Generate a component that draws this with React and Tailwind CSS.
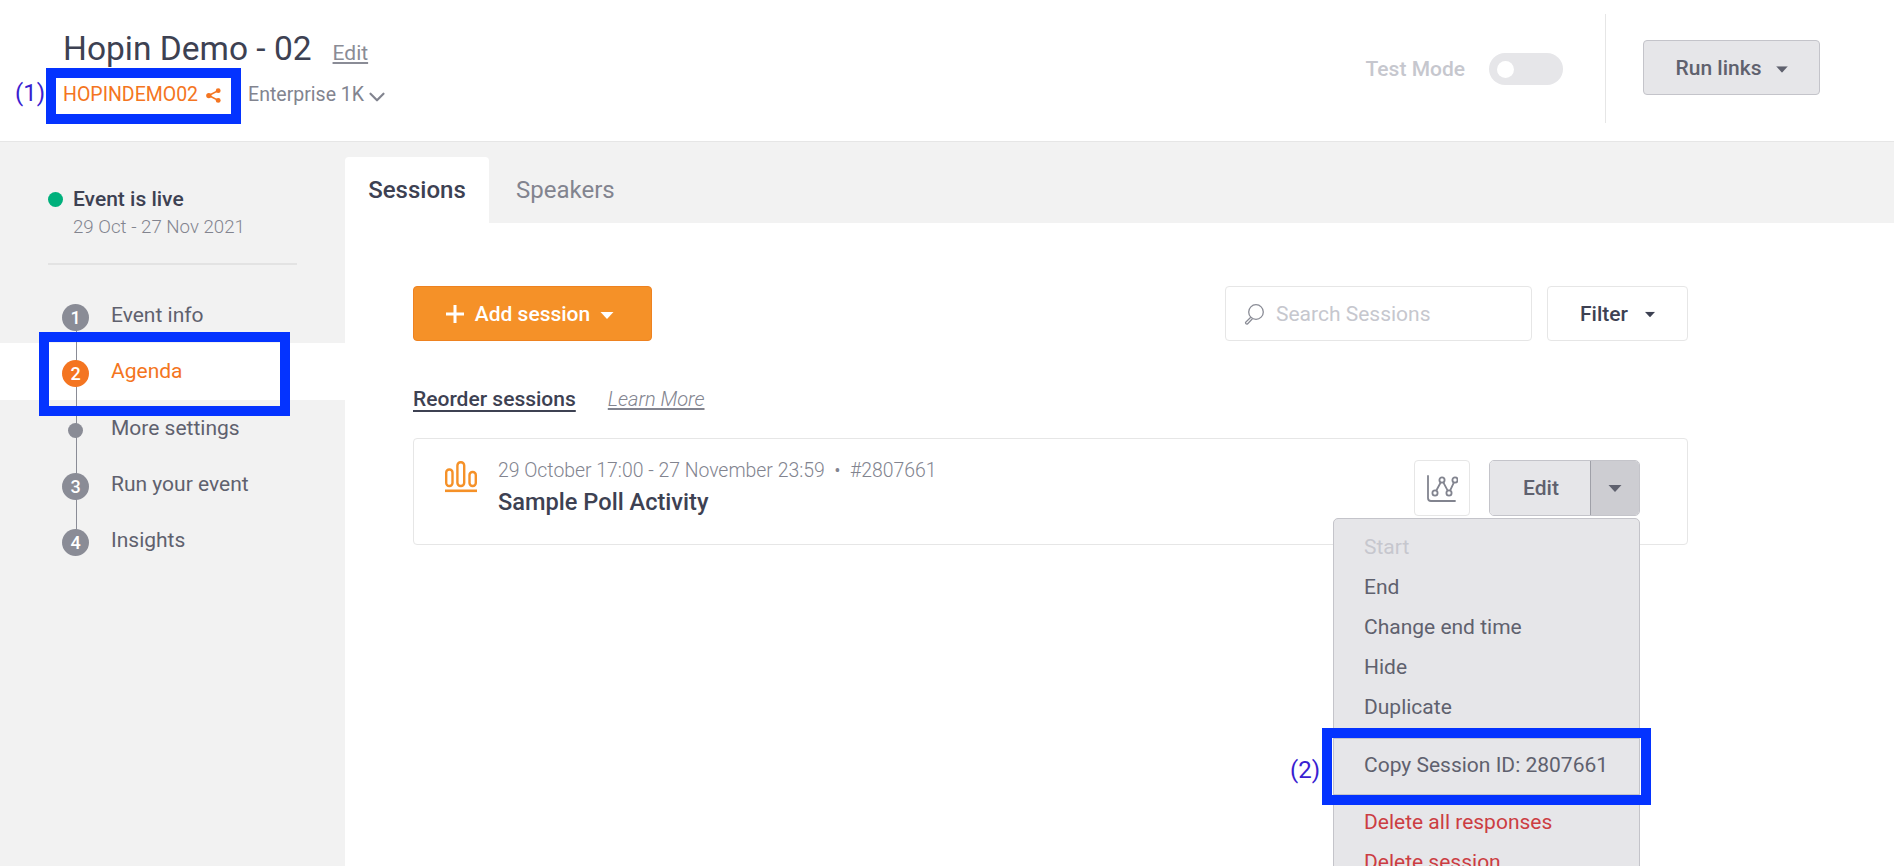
import React from "react";
import { ChevronDown } from "lucide-react";

const Caret = ({ className = "" }) => (
  <svg width="14" height="7" viewBox="0 0 14 7" className={className} fill="currentColor"><path d="M0.5 0h13L7 7z" /></svg>
);

const ShareIcon = () => (
  <svg width="15" height="15" viewBox="0 0 16 16" fill="#f47521" stroke="#f47521">
    <path d="M13 2.8 3 8l10 5.2" fill="none" strokeWidth="1.8" />
    <circle cx="13" cy="2.8" r="2.6" stroke="none" />
    <circle cx="3" cy="8" r="2.8" stroke="none" />
    <circle cx="13" cy="13.2" r="2.6" stroke="none" />
  </svg>
);

const PollIcon = () => (
  <svg width="32" height="32" viewBox="0 0 32 32" fill="none" stroke="#f59128" strokeWidth="2.4">
    <rect x="1.2" y="8.5" width="6.3" height="16.5" rx="3" />
    <rect x="12.4" y="1.2" width="6.8" height="23.8" rx="3.2" />
    <rect x="24.5" y="11" width="6.3" height="14" rx="3" />
    <path d="M0 29.8h32" strokeWidth="2.6" />
  </svg>
);

const GraphIcon = () => (
  <svg width="31" height="27" viewBox="0 0 31 27" fill="none" stroke="#82848f" strokeWidth="1.8">
    <path d="M1 1v22a3 3 0 0 0 3 3h24" strokeLinecap="round" />
    <circle cx="8" cy="18" r="2.6" />
    <circle cx="15" cy="5" r="2.6" />
    <circle cx="22" cy="18" r="2.6" />
    <circle cx="28" cy="5" r="2.6" />
    <path d="m9.2 15.7 4.6-8.4M16.3 7.3l4.4 8.4M23.1 15.6l3.8-8.2" />
  </svg>
);

const SearchIcon = () => (
  <svg width="22" height="22" viewBox="0 0 22 22" fill="none" stroke="#8a8c96" strokeWidth="1.3">
    <circle cx="13" cy="9" r="7.3" />
    <path d="M7.8 14.2 2.6 19.4a1.3 1.3 0 0 0 1.9 1.5l4.9-5.2" />
  </svg>
);

const Step = ({ n, label, active, dot }) => (
  <div className={`flex h-[56.25px] items-center pl-[62px] ${active ? "bg-white" : ""}`}>
    <div className="flex w-[49px] shrink-0 justify-start pt-[5px]">
      {dot ? (
        <div className="relative ml-[6px] h-[15px] w-[15px] rounded-full bg-[#8a8c96]" />
      ) : (
        <div className={`relative flex h-[27px] w-[27px] items-center justify-center rounded-full text-[18px] font-medium text-white ${active ? "bg-[#f47521]" : "bg-[#8a8c96]"}`}>
          {n}
        </div>
      )}
    </div>
    <span className={`pt-[1px] text-[21px] leading-none ${active ? "text-[#f47521]" : "text-[#5f616e]"}`}>{label}</span>
  </div>
);

const MenuItem = ({ children, className = "" }) => (
  <div className={`flex h-10 items-center pl-[30px] text-[21px] ${className}`}>{children}</div>
);

const Annot = ({ className }) => <div className={`absolute border-[10px] border-[#0433ff] ${className}`} />;

export default function App() {
  return (
    <div className="relative h-[866px] w-[1894px] overflow-hidden bg-white font-['Roboto',sans-serif] text-[#3d4152]">
      {/* Header */}
      <header className="flex h-[142px] items-start justify-between border-b border-[#e6e6e6] pl-[63px] pr-[74px]">
        <div>
          <div className="mt-[27px] flex items-baseline">
            <h1 className="text-[33.5px] leading-[44px]">Hopin Demo - 02</h1>
            <a className="ml-[21px] text-[21px] text-[#8a8c96] underline">Edit</a>
          </div>
          <div className="mt-[11px] flex h-[26px] items-center text-[19.5px] leading-[26px]">
            <span className="text-[#f47521]">HOPINDEMO02</span>
            <span className="ml-2"><ShareIcon /></span>
            <span className="ml-[27px] text-[#82848f]">Enterprise 1K</span>
            <ChevronDown size={26} strokeWidth={2} className="mt-[3px] text-[#82848f]" />
          </div>
        </div>
        <div className="flex h-full items-start">
          <div className="mt-[53px] flex items-center">
            <span className="text-[21px] font-medium leading-[32px] text-[#c6c7ce]">Test Mode</span>
            <div className="ml-6 flex h-[32px] w-[74px] items-center rounded-full bg-[#e6e6e9] pl-[8px]">
              <div className="h-[17px] w-[17px] rounded-full bg-white" />
            </div>
          </div>
          <div className="ml-[42px] mt-[14px] h-[109px] w-px bg-[#e6e6e6]" />
          <button className="ml-[37px] mt-[40px] flex h-[55px] w-[177px] items-center justify-center rounded-[4px] border border-[#c4c4ca] bg-[#e6e6e9] pl-[2px] pt-[2px] text-[21px] font-medium text-[#5f616e]">
            Run links
            <Caret className="ml-[14px] mt-[1px] scale-90 text-[#5f616e]" />
          </button>
        </div>
      </header>

      <div className="flex h-[724px]">
        {/* Sidebar */}
        <aside className="w-[345px] shrink-0 bg-[#f2f2f2]">
          <div className="mx-[48px] flex h-[123px] flex-col border-b-2 border-[#e3e3e3] pt-[43px]">
            <div className="flex items-center">
              <span className="h-[15px] w-[15px] rounded-full bg-[#00b07c]" />
              <span className="ml-[10px] text-[21px] font-medium leading-[28px] text-[#3d4152]">Event is live</span>
            </div>
            <div className="ml-[25px] text-[18.7px] font-light leading-[29px] text-[#82848f]">29 Oct - 27 Nov 2021</div>
          </div>
          <nav className="relative mt-[22px]">
            <div className="absolute left-[75.5px] top-[29px] h-[226px] w-px bg-[#8a8c96]" />
            <Step n="1" label="Event info" />
            <Step n="2" label="Agenda" active />
            <Step dot label="More settings" />
            <Step n="3" label="Run your event" />
            <Step n="4" label="Insights" />
          </nav>
        </aside>

        {/* Main */}
        <main className="min-w-0 flex-1">
          <div className="flex h-[81px] items-end bg-[#f2f2f2]">
            <div className="flex h-[66px] w-[144px] items-center justify-center rounded-t-[4px] bg-white text-[24px] font-medium text-[#3d4152]">Sessions</div>
            <div className="ml-[27px] flex h-[66px] items-center text-[24px] text-[#82848f]">Speakers</div>
          </div>

          <div className="w-[1343px] pl-[68px] pt-[63px]">
            <div className="flex items-center justify-between">
              <button className="flex h-[55px] w-[239px] items-center justify-center rounded-[4px] border border-[#ee8220] bg-[#f59128] pr-[5px] text-[21px] font-medium text-white">
                <svg width="18" height="18" viewBox="0 0 18 18" stroke="white" strokeWidth="3" className="mr-[11px]"><path d="M9 0v18M0 9h18" /></svg>
                <span className="pt-[2px]">Add session</span>
                <Caret className="ml-[10px] mt-[3px] text-white" />
              </button>
              <div className="flex gap-[15px]">
                <div className="flex h-[55px] w-[307px] items-center rounded-[4px] border border-[#e6e6e6] pl-[17px] text-[21px] text-[#c6c7ce]">
                  <SearchIcon />
                  <span className="ml-[11px] pt-[2px]">Search Sessions</span>
                </div>
                <button className="flex h-[55px] w-[141px] items-center justify-center rounded-[4px] border border-[#e6e6e6] pl-[2px] text-[21px] font-medium text-[#3d4152]">
                  <span className="pt-[2px]">Filter</span>
                  <Caret className="ml-[15px] mt-[1px] scale-[0.8] text-[#3d4152]" />
                </button>
              </div>
            </div>

            <div className="mt-[44px] flex items-baseline leading-[28px]">
              <a className="text-[21px] font-medium text-[#3d4152] underline decoration-2 underline-offset-[4px]">Reorder sessions</a>
              <a className="ml-[32px] text-[20px] font-light italic text-[#82848f] underline underline-offset-[2px]">Learn More</a>
            </div>

            <div className="mt-[25px] flex h-[107px] w-[1275px] rounded-[4px] border border-[#e6e6e6] pl-[31px] pt-[20px]">
              <div className="mt-[2px] w-[33px]"><PollIcon /></div>
              <div className="ml-[20px] w-[850px]">
                <div className="text-[19.4px] font-light leading-[24px] text-[#82848f]">
                  29 October 17:00 - 27 November 23:59&nbsp;&nbsp;•&nbsp;&nbsp;#2807661
                </div>
                <div className="mt-[5px] text-[23.6px] font-medium leading-[28px] text-[#3d4152]">Sample Poll Activity</div>
              </div>
              <div className="ml-[66px] mt-[1px] flex h-[56px] w-[56px] items-center justify-center rounded-[4px] border border-[#e6e6e6]">
                <GraphIcon />
              </div>
              <div className="ml-[19px] mt-[1px] flex h-[56px] w-[151px] overflow-hidden rounded-[5px] border border-[#c4c4ca]">
                <div className="flex flex-1 items-center justify-center bg-[#e6e6e9] pl-[2px] pt-[1px] text-[21px] font-medium text-[#5f616e]">Edit</div>
                <div className="flex w-[49px] items-center justify-center border-l border-[#9fa0a8] bg-[#cdcdd2]">
                  <Caret className="text-[#5f616e]" />
                </div>
              </div>
            </div>
          </div>
        </main>
      </div>

      {/* Dropdown menu */}
      <div className="absolute left-[1333px] top-[518px] h-[400px] w-[307px] rounded-[5px] border border-[#c4c4ca] bg-[#e6e6e9] pt-[9px] text-[#5f616e]">
        <MenuItem className="text-[#c6c7ce]">Start</MenuItem>
        <MenuItem>End</MenuItem>
        <MenuItem>Change end time</MenuItem>
        <MenuItem>Hide</MenuItem>
        <MenuItem>Duplicate</MenuItem>
        <div className="mt-[10px] border-y border-[#c4c4ca] pb-[8px] pt-[7px]">
          <MenuItem>Copy Session ID: 2807661</MenuItem>
        </div>
        <div className="pt-[8px]">
          <MenuItem className="text-[#cc3d42]">Delete all responses</MenuItem>
          <MenuItem className="text-[#cc3d42]">Delete session</MenuItem>
        </div>
      </div>

      {/* Annotations */}
      <Annot className="left-[46px] top-[68px] h-[56px] w-[195px]" />
      <Annot className="left-[39px] top-[332px] h-[84px] w-[251px]" />
      <Annot className="left-[1322px] top-[728px] h-[77px] w-[329px]" />
      <span className="absolute left-[15px] top-[78px] text-[24px] leading-[30px] text-[#3a1fd1]">(1)</span>
      <span className="absolute left-[1290px] top-[755px] text-[24px] leading-[30px] text-[#3a1fd1]">(2)</span>
    </div>
  );
}
